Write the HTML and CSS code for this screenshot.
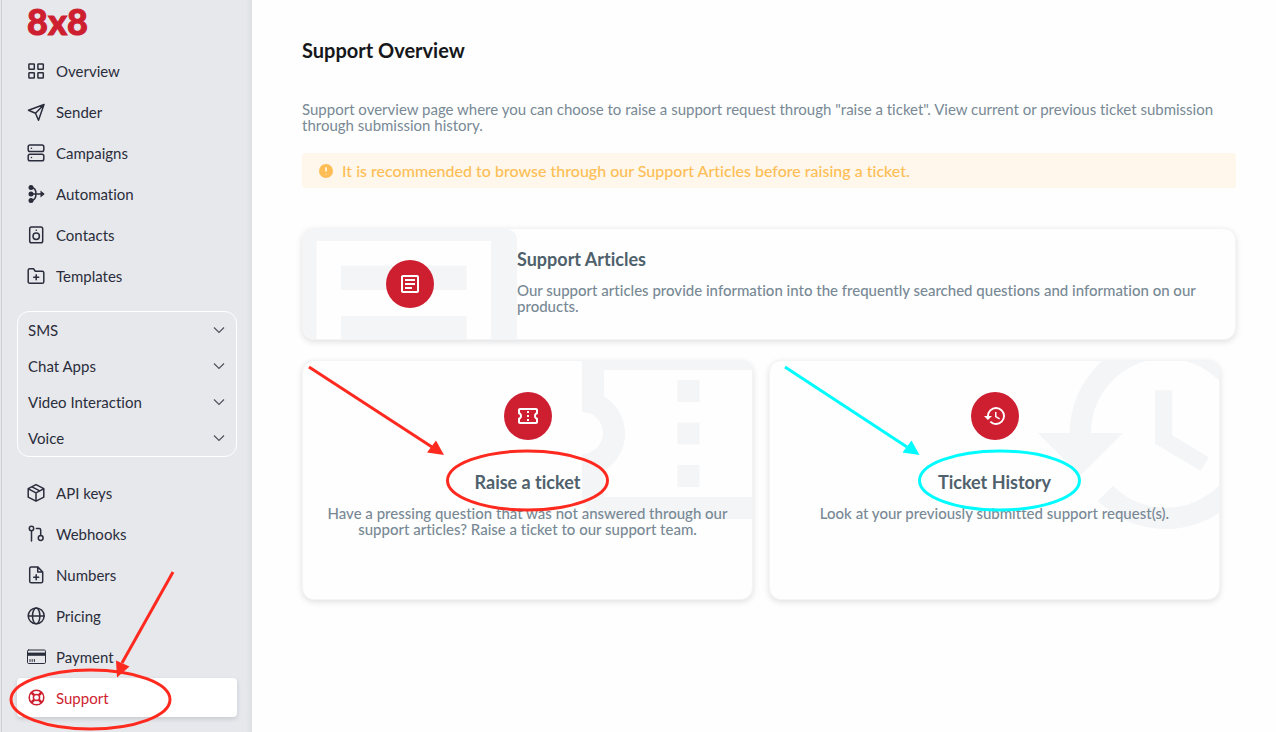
FILE: index.html
```html
<!DOCTYPE html>
<html lang="en">
<head>
<meta charset="utf-8">
<meta name="viewport" content="width=device-width, initial-scale=1">
<title>Support Overview</title>
<link rel="stylesheet" href="styles.css">
</head>
<body>
<div class="layout">
  <aside class="sidebar">
    <a class="logo" href="#">8x8</a>
    <nav class="menu" aria-label="Main">
      <ul class="menu-list">
        <li><a class="menu-link" href="#">
          <svg class="menu-icon" viewBox="0 0 20 20"><rect x="2.9" y="2.9" width="5.4" height="5.4" rx=".6"/><rect x="11.9" y="2.9" width="5.4" height="5.4" rx=".6"/><rect x="2.9" y="11.7" width="5.4" height="5.4" rx=".6"/><rect x="11.9" y="11.7" width="5.4" height="5.4" rx=".6"/></svg>
          Overview</a></li>
        <li><a class="menu-link" href="#">
          <svg class="menu-icon" viewBox="0 0 20 20"><path d="M18 2.5 2.5 8.2l7 3 3 7zM18 2.5l-8.5 8.7"/></svg>
          Sender</a></li>
        <li><a class="menu-link" href="#">
          <svg class="menu-icon" viewBox="0 0 20 20"><rect x="2.2" y="2" width="15.6" height="6.6" rx="1.8"/><rect x="2.2" y="11.2" width="15.6" height="6.6" rx="1.8"/><path d="M5.4 5.3h.1M5.4 14.5h.1"/></svg>
          Campaigns</a></li>
        <li><a class="menu-link" href="#">
          <svg class="menu-icon" viewBox="0 0 20 20"><g class="solid"><circle cx="5" cy="3.600" r="2.500"/><circle cx="5" cy="10" r="2.500"/><circle cx="5" cy="16.400" r="2.500"/><path d="m14.500 6.600 4.200 3.400-4.200 3.400z"/></g><path d="M5 3.600c3.200 0 5 2.600 5 6.400s-1.800 6.400-5 6.400M5 10h12"/></svg>
          Automation</a></li>
        <li><a class="menu-link" href="#">
          <svg class="menu-icon" viewBox="0 0 20 20"><rect x="3.700" y="1.900" width="13" height="15.800" rx="1.800"/><circle cx="10.200" cy="11.300" r="3.200"/><path d="M10.200 5.300h.1"/></svg>
          Contacts</a></li>
        <li><a class="menu-link" href="#">
          <svg class="menu-icon" viewBox="0 0 20 20"><path d="M17.800 15.700c0 .9-.7 1.600-1.600 1.600H3.800c-.9 0-1.600-.7-1.600-1.600V4.300c0-.9.7-1.600 1.600-1.600h3.700l1.800 2.500h6.900c.9 0 1.600.7 1.600 1.600zM10.200 8.700v5M7.700 11.200h5"/></svg>
          Templates</a></li>
      </ul>
      <div class="channels">
        <button class="channel" type="button">SMS <svg class="chevron" viewBox="0 0 12 12"><path d="m1 3.500 5 5 5-5"/></svg></button>
        <button class="channel" type="button">Chat Apps <svg class="chevron" viewBox="0 0 12 12"><path d="m1 3.500 5 5 5-5"/></svg></button>
        <button class="channel" type="button">Video Interaction <svg class="chevron" viewBox="0 0 12 12"><path d="m1 3.500 5 5 5-5"/></svg></button>
        <button class="channel" type="button">Voice <svg class="chevron" viewBox="0 0 12 12"><path d="m1 3.500 5 5 5-5"/></svg></button>
      </div>
      <ul class="menu-list">
        <li><a class="menu-link" href="#">
          <svg class="menu-icon" viewBox="0 0 20 20"><path d="M10 1.600 17.800 5.700v8.400L10 18.200l-7.800-4.100V5.700zM2.400 5.800 10 9.900l7.600-4.100M10 9.900v8.200M6 3.800l7.700 4.100"/></svg>
          API keys</a></li>
        <li><a class="menu-link" href="#">
          <svg class="menu-icon" viewBox="0 0 20 20"><circle cx="5.500" cy="4.500" r="2.200"/><path d="M5.500 6.700V17M10.400 4.500h2.800c1 0 1.500.5 1.500 1.500v5.600"/><circle cx="14.700" cy="14" r="2.400"/></svg>
          Webhooks</a></li>
        <li><a class="menu-link" href="#">
          <svg class="menu-icon" viewBox="0 0 20 20"><path d="M11.700 1.900H5.300c-.9 0-1.600.7-1.600 1.600v12.700c0 .9.7 1.600 1.600 1.600h9.800c.9 0 1.600-.7 1.600-1.600V7zM11.700 1.900V7h5M10.200 9.700v5M7.700 12.200h5"/></svg>
          Numbers</a></li>
        <li><a class="menu-link" href="#">
          <svg class="menu-icon" viewBox="0 0 20 20"><circle cx="10.200" cy="9.900" r="7.900"/><ellipse cx="10.200" cy="9.900" rx="3.700" ry="7.900"/><path d="M2.300 9.900h15.800"/></svg>
          Pricing</a></li>
        <li><a class="menu-link" href="#">
          <svg class="menu-icon" viewBox="0 0 20 20"><rect class="hairline" x="1.500" y="3" width="18" height="13.500" rx="1.200"/><path class="solid" d="M1.500 5.600h18v3.200h-18z"/><path class="hairline" d="M4 12.500v2M6.200 12.500v2M8.400 12.500v2"/></svg>
          Payment</a></li>
        <li class="menu-current"><a class="menu-link active" href="#" aria-current="page">
          <svg class="menu-icon" viewBox="0 0 20 20"><circle cx="10.500" cy="9.500" r="7.300"/><circle cx="10.500" cy="9.500" r="3.100"/><path class="spoke" d="m5.500 4.500 2.600 2.600M15.500 4.500l-2.600 2.600M5.500 14.500l2.600-2.600M15.500 14.500l-2.600-2.600"/></svg>
          Support</a>
          <svg class="note note-support" viewBox="0 0 180 170" aria-hidden="true"><path d="M173 4 122 95"/><path class="note-head" d="m116 92.500 13.500 6-12.500 11z"/><ellipse cx="90.500" cy="131.500" rx="79.500" ry="29.500"/></svg>
        </li>
      </ul>
    </nav>
  </aside>

  <main class="content">
    <h1 class="page-title">Support Overview</h1>
    <p class="intro">Support overview page where you can choose to raise a support request through "raise a ticket". View current or previous ticket submission through submission history.</p>
    <div class="alert" role="note">
      <svg class="alert-icon" viewBox="0 0 14 14"><circle cx="7" cy="7" r="7"/><path d="M7 3.300v4.300M7 9.900v.6"/></svg>
      It is recommended to browse through our Support Articles before raising a ticket.
    </div>

    <a class="card card-wide" href="#">
      <span class="article-art">
        <svg class="article-sheet" viewBox="0 0 214 110" aria-hidden="true"><path class="paper" d="M13.500 12H188v98H13.500z"/><path class="shade" d="M38 36.500h125.500V61H38zM38 87h125.500v23H38z"/></svg>
        <span class="badge"><svg class="badge-icon" viewBox="0 0 24 24"><path d="M19 5v14H5V5zm0-2H5c-1.100 0-2 .9-2 2v14c0 1.100.9 2 2 2h14c1.100 0 2-.9 2-2V5c0-1.100-.9-2-2-2zM14 17H7v-2h7zm3-4H7v-2h10zm0-4H7V7h10z"/></svg></span>
      </span>
      <span class="card-copy">
        <strong class="card-title">Support Articles</strong>
        <span class="card-text">Our support articles provide information into the frequently searched questions and information on our products.</span>
      </span>
    </a>

    <div class="card-row">
      <a class="card card-tall" href="#">
        <svg class="corner-art ticket-art" viewBox="0 0 170 158" aria-hidden="true"><path class="shade" fill-rule="evenodd" d="M0 0h170v9H22v26.500a43 43 0 0 1 0 74V136h148v22H22a22 22 0 0 1-22-22V93a21 21 0 0 0 0-42zM95.500 19h22v22h-22zM95.500 61.500h22v22h-22zM95.500 104h22v22h-22z"/></svg>
        <span class="badge"><svg class="badge-icon" viewBox="0 0 24 24"><path d="M22 10V6c0-1.110-.9-2-2-2H4c-1.100 0-1.990.89-1.990 2v4c1.100 0 1.990.9 1.990 2s-.89 2-2 2v4c0 1.100.9 2 2 2h16c1.100 0 2-.9 2-2v-4c-1.100 0-2-.9-2-2s.9-2 2-2zm-2-1.460c-1.190.69-2 1.990-2 3.460s.81 2.770 2 3.460V18H4v-2.540c1.190-.69 2-1.990 2-3.460 0-1.480-.8-2.770-1.990-3.460L4 6h16zM11 15h2v2h-2zm0-4h2v2h-2zm0-4h2v2h-2z"/></svg></span>
        <strong class="card-title">Raise a ticket</strong>
        <span class="card-text">Have a pressing question that was not answered through our support articles? Raise a ticket to our support team.</span>
        <svg class="note note-card" viewBox="0 0 450 240" aria-hidden="true"><path d="m7 7 123 80"/><path class="note-head" d="m134 80.500 8 14.500-17-2.500z"/><ellipse cx="225.500" cy="120.500" rx="80" ry="29.500"/></svg>
      </a>
      <a class="card card-tall" href="#">
        <svg class="corner-art history-art" viewBox="0 0 192 184" aria-hidden="true"><path class="shade" transform="translate(0 -56) scale(10.67)" d="M13 3a9 9 0 0 0-9 9H1l3.890 3.890.07.14L9 12H6c0-3.870 3.130-7 7-7s7 3.130 7 7-3.130 7-7 7c-1.930 0-3.680-.79-4.940-2.060l-1.420 1.420A8.954 8.954 0 0 0 13 21a9 9 0 0 0 0-18zm-1 5v5l4.280 2.540.77-1.280-3.430-2.060V8z"/></svg>
        <span class="badge"><svg class="badge-icon" viewBox="0 0 24 24"><path d="M13 3a9 9 0 0 0-9 9H1l3.890 3.890.07.14L9 12H6c0-3.870 3.130-7 7-7s7 3.130 7 7-3.130 7-7 7c-1.930 0-3.680-.79-4.940-2.060l-1.420 1.420A8.954 8.954 0 0 0 13 21a9 9 0 0 0 0-18zm-1 5v5l4.280 2.540.72-1.210-3.500-2.080V8z"/></svg></span>
        <strong class="card-title">Ticket History</strong>
        <span class="card-text">Look at your previously submitted support request(s).</span>
        <svg class="note note-card note-cyan" viewBox="0 0 450 240" aria-hidden="true"><path d="m16 7 122 80"/><path class="note-head" d="m142.500 80.500 8 14.500-17-2.500z"/><ellipse cx="230.500" cy="120.500" rx="80" ry="29.500"/></svg>
      </a>
    </div>
  </main>
</div>
</body>
</html>
```
FILE: styles.css
```css
* {
  box-sizing: border-box;
}

body {
  margin: 0;
  background: #fefefe;
  color: #2a2d3b;
  font: 15px/16px Lato, "Liberation Sans", sans-serif;
  font-variant-ligatures: none;
}

a {
  color: inherit;
  text-decoration: none;
}

.layout {
  display: flex;
  min-height: 100vh;
}

/* Sidebar */

.sidebar {
  flex: none;
  width: 252px;
  padding: 3px 15px 15px 17px;
  background: linear-gradient(to right, #e7e8ec 1px, #cdcfd2 1px, #cdcfd2 2px, #e7e8ec 2px, #e7e8ec 246px, #dddee2);
}

.logo {
  display: block;
  margin-bottom: 12px;
  padding-left: 10px;
  color: #ce1f31;
  font: 900 36px/36px Lato, sans-serif;
  -webkit-text-stroke: 1px #ce1f31;
}

.menu {
  display: flex;
  flex-direction: column;
  gap: 16px;
}

.menu-list {
  display: flex;
  flex-direction: column;
  gap: 2px;
  margin: 0;
  padding: 0;
  list-style: none;
}

.menu-link {
  display: flex;
  align-items: center;
  gap: 10px;
  height: 39px;
  padding-left: 9px;
  border-radius: 4px;
}

.menu-link.active {
  background: #fefffe;
  box-shadow: 0 2px 4px rgba(40, 45, 60, 0.16);
  color: #ce1f31;
}

.menu-current {
  position: relative;
}

.menu-icon {
  width: 20px;
  height: 20px;
  fill: none;
  stroke: currentColor;
  stroke-width: 1.5;
  stroke-linecap: round;
  stroke-linejoin: round;
}

.solid {
  fill: currentColor;
  stroke: none;
}

.hairline {
  stroke-width: 1;
}

.spoke {
  stroke-width: 2.6;
  stroke-linecap: butt;
}

.channels {
  display: flex;
  flex-direction: column;
  border: 1px solid #fff;
  border-radius: 12px;
}

.channel {
  display: flex;
  align-items: center;
  justify-content: space-between;
  height: 36px;
  padding: 0 11px 0 10px;
  border: 0;
  background: none;
  color: inherit;
  font: inherit;
  font-variant-ligatures: none;
  text-align: left;
}

.chevron {
  width: 12px;
  height: 12px;
  fill: none;
  stroke: #50535d;
  stroke-width: 1.2;
}

/* Content */

.content {
  flex: 1;
  min-width: 0;
  padding: 38px 40px 40px 50px;
}

.page-title {
  margin: 0 0 39px;
  color: #15171a;
  font-size: 20px;
  font-weight: 700;
  line-height: 24px;
}

.intro {
  margin: 0 0 20px;
  color: #788995;
}

.alert {
  display: flex;
  align-items: center;
  gap: 9px;
  min-height: 35px;
  margin-bottom: 40px;
  padding: 0 17px;
  border-radius: 3px;
  background: #fff7eb;
  color: #febe55;
  font-size: 16px;
  font-weight: 500;
}

.alert-icon {
  flex: none;
  width: 14px;
  height: 14px;
  fill: #febe55;
}

.alert-icon path {
  stroke: #fff7eb;
  stroke-width: 1.6;
}

/* Cards */

.card {
  position: relative;
  border: 1px solid #f3f4f5;
  border-radius: 12px;
  background: #fefefe;
  box-shadow: 0 2px 6px rgba(0, 0, 0, 0.12);
}

.card-wide {
  display: flex;
  min-height: 112px;
  margin-bottom: 20px;
}

.article-art {
  position: relative;
  display: flex;
  flex: none;
  align-items: center;
  justify-content: center;
  width: 214px;
  border-radius: 11px 11px 0 11px;
  background: #f4f5f7;
  overflow: hidden;
}

.article-sheet {
  position: absolute;
  inset: 0;
}

.paper {
  fill: #fefefe;
}

.shade {
  fill: #f4f5f7;
}

.card-copy {
  display: flex;
  flex-direction: column;
  gap: 11px;
  padding: 18px 20px 18px 0;
}

.card-title {
  color: #4f616c;
  font-size: 18px;
  font-weight: 700;
  line-height: 24px;
}

.card-text {
  color: #788995;
  font-weight: 500;
}

.card-row {
  display: grid;
  grid-template-columns: 1fr 1fr;
  gap: 16px;
  padding-right: 16px;
}

.card-tall {
  display: flex;
  flex-direction: column;
  align-items: center;
  min-height: 240px;
  padding: 31px 20px;
  text-align: center;
}

.card-tall .card-title {
  position: relative;
  margin: 30px 0 11px;
}

.card-tall .card-text {
  position: relative;
}

.corner-art {
  position: absolute;
  top: 0;
  right: 0;
  border-top-right-radius: 11px;
}

.ticket-art {
  width: 170px;
}

.history-art {
  width: 192px;
}

.badge {
  position: relative;
  display: flex;
  align-items: center;
  justify-content: center;
  width: 48px;
  height: 48px;
  border-radius: 50%;
  background: #ce1f31;
}

.badge-icon {
  width: 24px;
  height: 24px;
  fill: #fff;
}

/* Hand-drawn call-outs over the page */

.note {
  position: absolute;
  fill: none;
  stroke: #ff2a1f;
  stroke-width: 3;
  pointer-events: none;
}

.note-head {
  fill: #ff2a1f;
  stroke: none;
}

.note-support {
  top: -110px;
  left: -17px;
  width: 180px;
  height: 170px;
}

.note-card {
  top: -1px;
  left: calc(50% - 226px);
  width: 450px;
  height: 240px;
}

.note-cyan {
  stroke: #00fcff;
}

.note-cyan .note-head {
  fill: #00fcff;
}
```
